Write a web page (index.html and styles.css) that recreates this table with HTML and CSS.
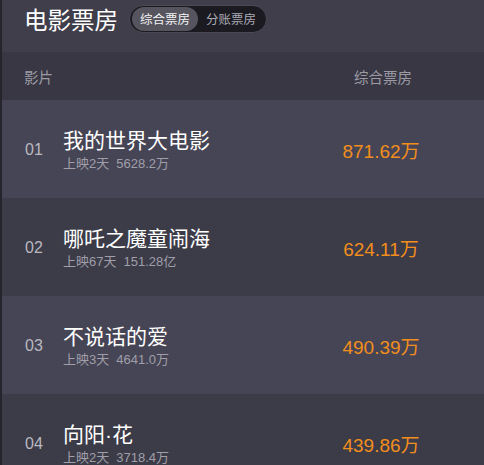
FILE: index.html
```html
<!DOCTYPE html>
<html lang="zh">
<head>
<meta charset="utf-8">
<link rel="stylesheet" href="styles.css">
</head>
<body>
<div class="page">
  <div class="top">
    <div class="title">电影票房</div>
    <div class="toggle">
      <span class="tab active">综合票房</span>
      <span class="tab">分账票房</span>
    </div>
  </div>
  <div class="colhead">
    <div class="ch-film">影片</div>
    <div class="ch-val">综合票房</div>
  </div>
  <div class="row odd">
    <div class="rank">01</div>
    <div class="info">
      <div class="name">我的世界大电影</div>
      <div class="sub"><span>上映2天</span><span>5628.2万</span></div>
    </div>
    <div class="val">871.62万</div>
  </div>
  <div class="row even">
    <div class="rank">02</div>
    <div class="info">
      <div class="name">哪吒之魔童闹海</div>
      <div class="sub"><span>上映67天</span><span>151.28亿</span></div>
    </div>
    <div class="val">624.11万</div>
  </div>
  <div class="row odd">
    <div class="rank">03</div>
    <div class="info">
      <div class="name">不说话的爱</div>
      <div class="sub"><span>上映3天</span><span>4641.0万</span></div>
    </div>
    <div class="val">490.39万</div>
  </div>
  <div class="row even">
    <div class="rank">04</div>
    <div class="info">
      <div class="name">向阳·花</div>
      <div class="sub"><span>上映2天</span><span>3718.4万</span></div>
    </div>
    <div class="val">439.86万</div>
  </div>
</div>
</body>
</html>
```
FILE: styles.css
```css
* { box-sizing: border-box; }
html, body { margin: 0; padding: 0; background: #3c3b48; }
body {
  font-family: "Liberation Sans", "Noto Sans CJK SC", sans-serif;
  color: #fff;
  width: 484px;
  height: 465px;
  overflow: hidden;
}
.page {
  border-left: 2px solid #26252d;
  height: 465px;
  overflow: hidden;
}
.top {
  height: 52px;
  background: #3f3e4a;
  display: flex;
  align-items: flex-start;
  padding: 5px 0 0 22px;
  gap: 11px;
}
.title {
  font-family: "Noto Sans CJK SC", sans-serif;
  font-size: 23.5px;
  line-height: 28px;
  color: #fff;
}
.toggle {
  display: flex;
  align-items: center;
  height: 28px;
  padding: 0 2px;
  border-radius: 14px;
  background: #1b1a21;
  border: 1px solid #4a4955;
}
.tab {
  font-family: "Noto Sans CJK SC", sans-serif;
  font-size: 12.5px;
  line-height: 24px;
  padding: 0 8px;
  border-radius: 12px;
  color: #aaa9b3;
}
.tab.active {
  background: #56555f;
  color: #f2f2f4;
}
.colhead {
  height: 48px;
  background: #383743;
  display: flex;
  align-items: center;
  padding-left: 22px;
  font-family: "Noto Sans CJK SC", sans-serif;
  font-size: 14.5px;
  color: #9c9ba5;
}
.ch-film { flex: 1; }
.ch-val { width: 150px; text-align: center; margin-right: 26px; }
.row {
  height: 98px;
  display: flex;
  align-items: center;
  padding-left: 23px;
}
.row.odd { background: #464555; }
.row.even { background: #3c3b48; }
.rank {
  width: 38px;
  font-size: 16px;
  color: #b9b8c0;
  margin-top: 2px;
}
.info {
  flex: 1;
  display: flex;
  flex-direction: column;
  margin-top: 1px;
}
.name {
  font-family: "Liberation Sans", "Noto Sans CJK SC", sans-serif;
  font-size: 21px;
  line-height: 28px;
  color: #fff;
}
.sub {
  font-size: 13px;
  line-height: 18px;
  color: #a09fa9;
  display: flex;
  gap: 7px;
}
.val {
  width: 150px;
  margin-right: 28px;
  text-align: center;
  font-size: 19px;
  color: #f28e1c;
}
```
